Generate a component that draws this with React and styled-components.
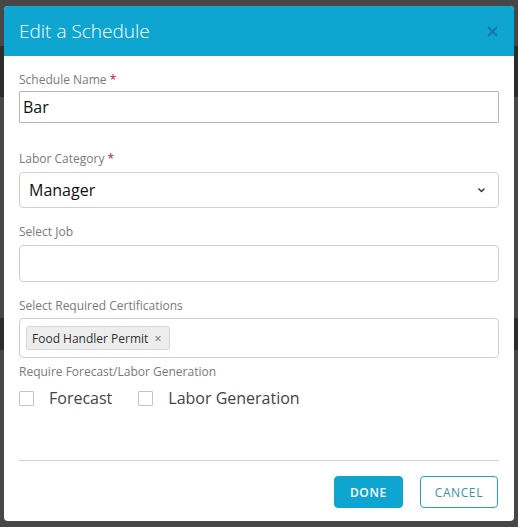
import React, { useState } from 'react';
import styled, { createGlobalStyle } from 'styled-components';

const GlobalStyle = createGlobalStyle`
  html, body {
    margin: 0;
    padding: 0;
    background: #474747;
    font-family: "Open Sans", "Noto Sans", sans-serif;
  }
`;

const Backdrop = styled.div`
  position: relative;
  width: 518px;
  height: 527px;
  overflow: hidden;
  background: #474747;
  display: flex;
  flex-direction: column;
`;

const Band = styled.div`
  height: ${(p) => p.h}px;
  margin-top: ${(p) => p.top}px;
  background: #2c2c2c;
`;

const Modal = styled.div`
  position: absolute;
  left: 4px;
  top: 6px;
  width: 510px;
  height: 515px;
  background: #fff;
  border-radius: 4px;
  overflow: hidden;
  display: flex;
  flex-direction: column;
`;

const Header = styled.div`
  height: 50px;
  background: #0ea5d1;
  display: flex;
  align-items: center;
  justify-content: space-between;
  padding: 0 16px 0 15px;
  box-sizing: border-box;
`;

const Title = styled.h2`
  margin: 0;
  font-weight: 300;
  font-size: 19px;
  color: #fff;
  padding-bottom: 1px;
`;

const Close = styled.button`
  border: none;
  background: none;
  padding: 0;
  cursor: pointer;
  display: flex;
  color: #1878a0;
`;

const Body = styled.div`
  flex: 1;
  padding: 16px 15px 0 15px;
  display: flex;
  flex-direction: column;
`;

const Label = styled.label`
  font-size: 12px;
  color: #7a7a7a;
  line-height: 16px;
  margin-top: ${(p) => p.top || 0}px;
  margin-bottom: ${(p) => p.gap || 4}px;
`;

const Req = styled.span`
  color: #c0104a;
`;

const Input = styled.div`
  height: ${(p) => p.h}px;
  box-sizing: border-box;
  border: 1px solid ${(p) => (p.dark ? '#b5b5b5' : '#cfcfcf')};
  border-radius: ${(p) => p.r}px;
  display: flex;
  align-items: center;
  padding: 0 ${(p) => p.pad}px;
  font-size: 16px;
  color: #111;
`;

const SelectBox = styled(Input)`
  justify-content: space-between;
  padding-right: 12px;
`;

const Chip = styled.span`
  display: inline-flex;
  align-items: center;
  gap: 6px;
  height: 24px;
  box-sizing: border-box;
  padding: 0 8px 0 5px;
  background: #ededed;
  border: 1px solid #d6d6d6;
  border-radius: 3px;
  font-size: 12px;
  color: #333;
`;

const ChipX = styled.span`
  font-size: 12px;
  color: #666;
`;

const Checks = styled.div`
  display: flex;
  align-items: center;
  margin-top: 3px;
`;

const Check = styled.label`
  display: flex;
  align-items: center;
  gap: 15px;
  font-size: 16px;
  color: #444;
  margin-right: 26px;
  cursor: pointer;
`;

const Box = styled.span`
  width: 15px;
  height: 15px;
  box-sizing: border-box;
  border: 1px solid #c4c4c4;
  border-radius: 1px;
  background: ${(p) => (p.on ? '#0ea5d1' : '#fff')};
`;

const Divider = styled.hr`
  border: none;
  border-top: 1px solid #cfcfcf;
  margin: 0 15px;
`;

const Footer = styled.div`
  display: flex;
  justify-content: flex-end;
  gap: 17px;
  padding: 15px 16px 13px 15px;
`;

const Btn = styled.button`
  height: 32px;
  box-sizing: border-box;
  padding: 0 ${(p) => p.pad}px;
  border-radius: 4px;
  font-family: "Open Sans", sans-serif;
  font-size: 12px;
  font-weight: ${(p) => (p.primary ? 600 : 400)};
  letter-spacing: 0.6px;
  cursor: pointer;
  background: ${(p) => (p.primary ? '#0ea5d1' : '#fff')};
  color: ${(p) => (p.primary ? '#fff' : '#3a8fb2')};
  border: 1px solid ${(p) => (p.primary ? '#0ea5d1' : '#2aa0c8')};
`;

const App = () => {
  const [forecast, setForecast] = useState(false);
  const [labor, setLabor] = useState(false);

  return (
    <>
      <GlobalStyle />
      <Backdrop>
        <Band top={46} h={51} />
        <Band top={221} h={32} />
        <Modal>
          <Header>
            <Title>Edit a Schedule</Title>
            <Close aria-label="close">
              <svg width="11" height="11" viewBox="0 0 11 11">
                <path d="M1 1L10 10M10 1L1 10" stroke="currentColor" strokeWidth="2" />
              </svg>
            </Close>
          </Header>
          <Body>
            <Label gap={3}>
              Schedule Name <Req>*</Req>
            </Label>
            <Input h={32} r={1} pad={3} dark>
              Bar
            </Input>
            <Label top={28} gap={5}>
              Labor Category <Req>*</Req>
            </Label>
            <SelectBox h={36} r={4} pad={9}>
              Manager
              <svg width="9" height="6" viewBox="0 0 9 6">
                <path d="M1.5 1.5L4.5 4.5L7.5 1.5" stroke="#333" strokeWidth="1.4" fill="none" />
              </svg>
            </SelectBox>
            <Label top={16} gap={5}>
              Select Job
            </Label>
            <Input h={37} r={4} pad={9} />
            <Label top={16} gap={4}>
              Select Required Certifications
            </Label>
            <Input h={40} r={4} pad={6}>
              <Chip>
                Food Handler Permit <ChipX>×</ChipX>
              </Chip>
            </Input>
            <Label top={6} gap={0}>
              Require Forecast/Labor Generation
            </Label>
            <Checks>
              <Check onClick={() => setForecast(!forecast)}>
                <Box on={forecast} />
                Forecast
              </Check>
              <Check onClick={() => setLabor(!labor)}>
                <Box on={labor} />
                Labor Generation
              </Check>
            </Checks>
          </Body>
          <Divider />
          <Footer>
            <Btn primary pad={15}>DONE</Btn>
            <Btn pad={14}>CANCEL</Btn>
          </Footer>
        </Modal>
      </Backdrop>
    </>
  );
};

export default App;
